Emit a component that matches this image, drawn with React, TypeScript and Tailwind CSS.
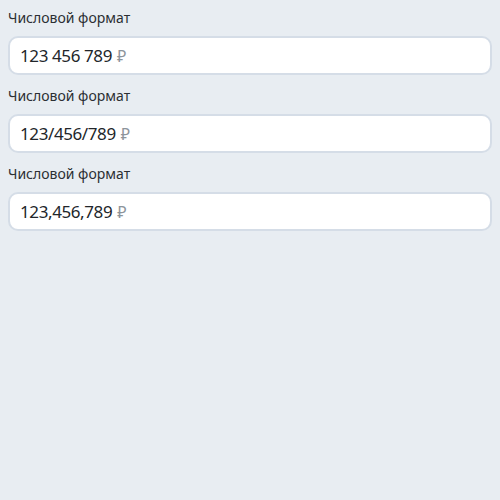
const fields = [
  { label: 'Числовой формат', value: '123 456 789' },
  { label: 'Числовой формат', value: '123/456/789' },
  { label: 'Числовой формат', value: '123,456,789' },
]

const App = () => {
  return (
    <div
      className="min-h-screen bg-[#e8edf2] px-2 pt-2 flex flex-col gap-[11px]"
      style={{ fontFamily: '"Noto Sans", sans-serif' }}
    >
      {fields.map((f, i) => (
        <div key={i} className="flex flex-col gap-2">
          <label className="text-[14px] leading-5 text-[#2b2f33]">{f.label}</label>
          <div className="h-[39px] bg-white border-2 border-[#d5dde7] rounded-[10px] pl-[10px] pr-3 flex items-center">
            <span className="text-[17px] tracking-[-0.4px] text-[#22262a]">{f.value}</span>
            <span className="text-[16px] text-[#8d949b] ml-[5px]">₽</span>
          </div>
        </div>
      ))}
    </div>
  )
}

export default App
